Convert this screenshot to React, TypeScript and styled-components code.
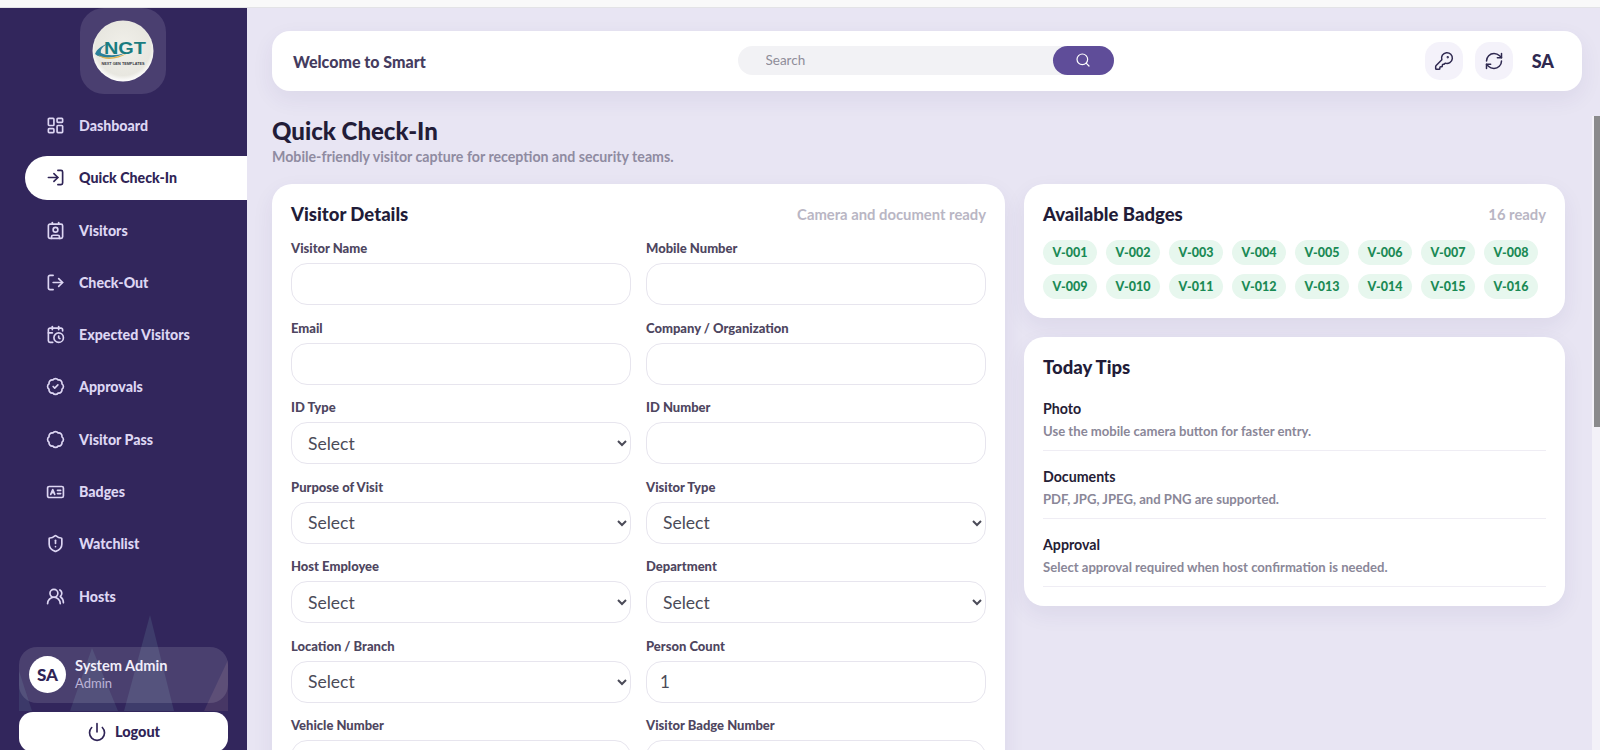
import React from "react";
import styled, { createGlobalStyle } from "styled-components";
import {
  BadgeCheck,
  Badge,
  CalendarClock,
  Contact,
  KeyRound,
  LayoutDashboard,
  LogIn,
  LogOut,
  Power,
  RefreshCw,
  Search,
  ShieldAlert,
  UsersRound,
} from "lucide-react";

const FONT = `Lato, "Noto Sans", sans-serif`;

const GlobalStyle = createGlobalStyle`
  html, body {
    margin: 0;
    height: 100%;
    overflow: hidden;
    background: #e8e5f3;
    font-family: ${FONT};
  }
  * {
    box-sizing: border-box;
  }
`;

const BadgesIcon = () => (
  <svg width="20" height="20" viewBox="0 0 24 24" fill="none" stroke="currentColor" strokeWidth="2.1" strokeLinecap="round" strokeLinejoin="round">
    <rect x="2" y="5" width="20" height="14" rx="2" />
    <path d="M6 15l2.500-6 2.500 6M7 13h3M14.500 10h4M14.500 14h4" />
  </svg>
);

const navItems = [
  { label: "Dashboard", icon: <LayoutDashboard size={21} strokeWidth={2.1} /> },
  { label: "Quick Check-In", icon: <LogIn size={21} strokeWidth={2.1} />, active: true },
  { label: "Visitors", icon: <Contact size={21} strokeWidth={2.1} /> },
  { label: "Check-Out", icon: <LogOut size={21} strokeWidth={2.1} /> },
  { label: "Expected Visitors", icon: <CalendarClock size={21} strokeWidth={2.1} /> },
  { label: "Approvals", icon: <BadgeCheck size={21} strokeWidth={2.1} /> },
  { label: "Visitor Pass", icon: <Badge size={21} strokeWidth={2.1} /> },
  { label: "Badges", icon: <BadgesIcon /> },
  { label: "Watchlist", icon: <ShieldAlert size={21} strokeWidth={2.1} /> },
  { label: "Hosts", icon: <UsersRound size={21} strokeWidth={2.1} /> },
];

const fields = [
  { label: "Visitor Name" },
  { label: "Mobile Number" },
  { label: "Email" },
  { label: "Company / Organization" },
  { label: "ID Type", select: true },
  { label: "ID Number" },
  { label: "Purpose of Visit", select: true },
  { label: "Visitor Type", select: true },
  { label: "Host Employee", select: true },
  { label: "Department", select: true },
  { label: "Location / Branch", select: true },
  { label: "Person Count", value: "1" },
  { label: "Vehicle Number" },
  { label: "Visitor Badge Number" },
];

const tips = [
  { title: "Photo", text: "Use the mobile camera button for faster entry." },
  { title: "Documents", text: "PDF, JPG, JPEG, and PNG are supported." },
  { title: "Approval", text: "Select approval required when host confirmation is needed." },
];

const badges = Array.from({ length: 16 }, (_, i) => `V-${String(i + 1).padStart(3, "0")}`);

const Logo = () => (
  <svg width="62" height="62" viewBox="0 0 62 62">
    <defs>
      <radialGradient id="disc" cx="50%" cy="45%" r="55%">
        <stop offset="0%" stopColor="#f1f0ea" />
        <stop offset="82%" stopColor="#e8e7e0" />
        <stop offset="100%" stopColor="#ffffff" />
      </radialGradient>
    </defs>
    <circle cx="31" cy="31" r="30.500" fill="url(#disc)" />
    <path d="M3 34C5 29 9 26 15 24 10 27 8 30 9 33 15 36 24 36 33 33 24 38 10 40 3 34z" fill="#2a7f9a" />
    <path d="M6 35C13 39 24 38 36 33 25 40 12 41 6 35z" fill="#e0b24d" />
    <NgtText x="33" y="34" textAnchor="middle" textLength="42" lengthAdjust="spacingAndGlyphs">NGT</NgtText>
    <TagText x="31" y="45" textAnchor="middle" textLength="43" lengthAdjust="spacingAndGlyphs">NEXT GEN TEMPLATES</TagText>
  </svg>
);

const Mountains = () => (
  <MountainSvg width="247" height="140" viewBox="0 0 247 140">
    <path d="M150 44l24 96h-50z" fill="#5d7893" fillOpacity="0.28" />
    <path d="M92 77l26 63h-48z" fill="#5d7893" fillOpacity="0.24" />
    <path d="M19 100l13 40h-13z" fill="#5d7893" fillOpacity="0.24" />
    <path d="M228 89v51h-24z" fill="#9c7f8c" fillOpacity="0.2" />
  </MountainSvg>
);

export default function App() {
  return (
    <>
      <GlobalStyle />
      <TopStrip />
      <Shell>
        <Sidebar>
          <LogoTile>
            <Logo />
          </LogoTile>
          <Nav>
            {navItems.map((item) => (
              <NavItem key={item.label} $active={item.active}>
                <NavIcon>{item.icon}</NavIcon>
                {item.label}
              </NavItem>
            ))}
          </Nav>
          <Mountains />
          <SideFooter>
            <UserCard>
              <Avatar>SA</Avatar>
              <div>
                <UserName>System Admin</UserName>
                <UserRole>Admin</UserRole>
              </div>
            </UserCard>
            <LogoutButton>
              <Power size={20} strokeWidth={2} />
              Logout
            </LogoutButton>
          </SideFooter>
        </Sidebar>
        <Main>
          <Topbar>
            <Welcome>Welcome to Smart</Welcome>
            <SearchBox>
              <SearchInput placeholder="Search" />
              <SearchButton>
                <Search size={16} strokeWidth={1.8} />
              </SearchButton>
            </SearchBox>
            <TopActions>
              <ActionTile>
                <KeyRound size={20} strokeWidth={1.8} />
              </ActionTile>
              <ActionTile>
                <RefreshCw size={20} strokeWidth={1.8} />
              </ActionTile>
              <Initials>SA</Initials>
            </TopActions>
          </Topbar>
          <Content>
            <PageTitle>Quick Check-In</PageTitle>
            <PageSub>Mobile-friendly visitor capture for reception and security teams.</PageSub>
            <Columns>
              <Card>
                <CardHead>
                  <CardTitle>Visitor Details</CardTitle>
                  <CardNote>Camera and document ready</CardNote>
                </CardHead>
                <FormGrid>
                  {fields.map((f) => (
                    <Field key={f.label}>
                      <FieldLabel>{f.label}</FieldLabel>
                      {f.select ? (
                        <FieldSelect>
                          <option>Select</option>
                        </FieldSelect>
                      ) : (
                        <FieldInput defaultValue={f.value} />
                      )}
                    </Field>
                  ))}
                </FormGrid>
              </Card>
              <SideColumn>
                <Card>
                  <CardHead>
                    <CardTitle>Available Badges</CardTitle>
                    <CardNote>16 ready</CardNote>
                  </CardHead>
                  <ChipGrid>
                    {badges.map((b) => (
                      <Chip key={b}>{b}</Chip>
                    ))}
                  </ChipGrid>
                </Card>
                <Card>
                  <TipsTitle>Today Tips</TipsTitle>
                  {tips.map((t) => (
                    <Tip key={t.title}>
                      <TipTitle>{t.title}</TipTitle>
                      <TipText>{t.text}</TipText>
                    </Tip>
                  ))}
                </Card>
              </SideColumn>
            </Columns>
          </Content>
        </Main>
      </Shell>
      <ScrollTrack>
        <ScrollThumb />
      </ScrollTrack>
    </>
  );
}

const TopStrip = styled.div`
  height: 8px;
  background: #f9f9f9;
  border-bottom: 1px solid #e3e3e6;
`;

const Shell = styled.div`
  display: flex;
  height: 742px;
  overflow: hidden;
`;

const Sidebar = styled.aside`
  position: relative;
  flex: 0 0 247px;
  display: flex;
  flex-direction: column;
  background: #32265c;
  > * {
    flex-shrink: 0;
  }
`;

const LogoTile = styled.div`
  width: 86px;
  height: 86px;
  margin: 0 auto 0 80px;
  display: flex;
  align-items: center;
  justify-content: center;
  border-radius: 24px;
  background: #4a3f70;
`;

const NgtText = styled.text`
  font-family: "Liberation Sans", sans-serif;
  font-size: 17px;
  font-weight: 700;
  fill: #1a7c80;
`;

const TagText = styled.text`
  font-family: "Liberation Sans", sans-serif;
  font-size: 3.400px;
  font-weight: 700;
  fill: #33363f;
`;

const Nav = styled.nav`
  display: flex;
  flex-direction: column;
  gap: 8.300px;
  margin: 9.500px 0 0 25px;
`;

const NavItem = styled.a<{ $active?: boolean }>`
  flex: none;
  height: 44px;
  display: flex;
  align-items: center;
  gap: 14px;
  padding-left: 21px;
  font-size: 14.200px;
  font-weight: 900;
  color: ${(p) => (p.$active ? "#2f2456" : "#ddd6f3")};
  background: ${(p) => (p.$active ? "#ffffff" : "transparent")};
  border-radius: 22px 0 0 22px;
`;

const NavIcon = styled.span`
  width: 19px;
  display: flex;
  justify-content: center;
`;

const MountainSvg = styled.svg`
  position: absolute;
  left: 0;
  bottom: 39px;
`;

const SideFooter = styled.div`
  position: relative;
  display: flex;
  flex-direction: column;
  gap: 9px;
  margin-top: 28.800px;
  padding: 0 19px;
`;

const UserCard = styled.div`
  flex: none;
  height: 56px;
  display: flex;
  align-items: center;
  gap: 9px;
  padding-left: 10px;
  border-radius: 18px;
  background: rgba(255, 255, 255, 0.12);
`;

const Avatar = styled.div`
  width: 37px;
  height: 37px;
  display: flex;
  align-items: center;
  justify-content: center;
  border-radius: 50%;
  background: #ffffff;
  color: #2f2456;
  font-size: 17px;
  font-weight: 900;
`;

const UserName = styled.div`
  font-size: 14.600px;
  font-weight: 700;
  line-height: 18px;
  color: #f1eefa;
`;

const UserRole = styled.div`
  font-size: 13px;
  line-height: 17px;
  color: #bcb4d8;
`;

const LogoutButton = styled.button`
  flex: none;
  height: 40px;
  display: flex;
  align-items: center;
  justify-content: center;
  gap: 8px;
  border: 0;
  border-radius: 14px;
  background: #ffffff;
  color: #2f2456;
  font-family: ${FONT};
  font-size: 14.500px;
  font-weight: 900;
`;

const Main = styled.main`
  flex: 1;
  min-width: 0;
  padding: 23px 18px 0 25px;
  overflow: hidden;
  background: #e8e5f3;
`;

const Topbar = styled.header`
  height: 60px;
  display: flex;
  align-items: center;
  padding: 0 28px 0 21px;
  border-radius: 18px;
  background: #ffffff;
  box-shadow: 0 8px 22px rgba(60, 45, 120, 0.07);
`;

const Welcome = styled.div`
  flex: 0 0 444.500px;
  font-size: 16px;
  font-weight: 900;
  color: #453c5f;
`;

const SearchBox = styled.div`
  position: relative;
  width: 376px;
  height: 29px;
  margin-bottom: 2px;
`;

const SearchInput = styled.input`
  width: 100%;
  height: 100%;
  padding: 0 70px 0 28px;
  border: 0;
  outline: 0;
  border-radius: 15px;
  background: #f2f2f5;
  font-family: ${FONT};
  font-size: 13.500px;
  &::placeholder {
    color: #8f8d99;
    opacity: 1;
  }
`;

const SearchButton = styled.button`
  position: absolute;
  right: 0;
  top: 0;
  width: 61px;
  height: 29px;
  display: flex;
  align-items: center;
  justify-content: center;
  border: 0;
  border-radius: 15px;
  background: #5f4d99;
  color: #ffffff;
`;

const TopActions = styled.div`
  margin-left: auto;
  display: flex;
  align-items: center;
  gap: 12px;
`;

const ActionTile = styled.div`
  width: 38px;
  height: 38px;
  display: flex;
  align-items: center;
  justify-content: center;
  border-radius: 15px;
  background: #f4f2fa;
  color: #2f2950;
`;

const Initials = styled.div`
  margin-left: 7px;
  font-size: 18px;
  font-weight: 900;
  color: #2f2950;
`;

const Content = styled.div`
  padding-right: 17px;
`;

const PageTitle = styled.h1`
  margin: 25px 0 0;
  font-size: 24px;
  line-height: 30px;
  font-weight: 900;
  color: #221c38;
`;

const PageSub = styled.p`
  margin: 1px 0 0;
  font-size: 14.200px;
  line-height: 20px;
  font-weight: 700;
  color: #8f8ba1;
`;

const Columns = styled.div`
  display: grid;
  grid-template-columns: 733px 541px;
  gap: 19px;
  align-items: start;
  margin-top: 17px;
`;

const SideColumn = styled.div`
  display: flex;
  flex-direction: column;
  gap: 19px;
`;

const Card = styled.section`
  padding: 18px 19px;
  border-radius: 20px;
  background: #ffffff;
  box-shadow: 0 8px 22px rgba(60, 45, 120, 0.07);
`;

const CardHead = styled.div`
  display: flex;
  align-items: center;
  justify-content: space-between;
  height: 24px;
`;

const CardTitle = styled.h2`
  margin: 0;
  font-size: 18.500px;
  line-height: 24px;
  font-weight: 900;
  color: #221c38;
`;

const TipsTitle = styled(CardTitle)`
  margin-bottom: 20px;
`;

const CardNote = styled.span`
  font-size: 14.800px;
  font-weight: 700;
  color: #b9b6c4;
`;

const FormGrid = styled.div`
  display: grid;
  grid-template-columns: 340px 340px;
  column-gap: 15px;
  row-gap: 13.500px;
  margin-top: 13px;
`;

const Field = styled.div`
  display: flex;
  flex-direction: column;
`;

const FieldLabel = styled.label`
  height: 18px;
  margin-bottom: 6px;
  font-size: 13px;
  line-height: 18px;
  font-weight: 900;
  color: #4e4660;
`;

const FieldInput = styled.input`
  height: 42px;
  padding: 0 13px;
  border: 1px solid #e7e5ee;
  border-radius: 16px;
  outline: 0;
  background: #ffffff;
  font-family: ${FONT};
  font-size: 17px;
  color: #4b4b58;
`;

const FieldSelect = styled.select`
  height: 42px;
  padding: 0 4px 0 12px;
  border: 1px solid #e7e5ee;
  border-radius: 16px;
  outline: 0;
  background: #ffffff;
  font-family: ${FONT};
  font-size: 17.500px;
  color: #4b4b58;
`;

const ChipGrid = styled.div`
  display: flex;
  flex-wrap: wrap;
  gap: 8.500px 9px;
  margin: 14px 0 1px;
`;

const Chip = styled.span`
  width: 54px;
  height: 25px;
  display: flex;
  align-items: center;
  justify-content: center;
  border-radius: 13px;
  background: #e7f7ee;
  color: #1a8a55;
  font-size: 12.500px;
  font-weight: 900;
`;

const Tip = styled.div`
  margin-top: 16px;
  padding-bottom: 10px;
  border-bottom: 1px solid #efedf4;
  &:first-of-type {
    margin-top: 0;
  }
  &:last-of-type {
    margin-bottom: 1px;
  }
`;

const TipTitle = styled.div`
  font-size: 14.200px;
  line-height: 20px;
  font-weight: 700;
  color: #252035;
`;

const TipText = styled.div`
  margin-top: 3px;
  font-size: 13.100px;
  line-height: 18px;
  font-weight: 700;
  color: #8a8798;
`;

const ScrollTrack = styled.div`
  position: fixed;
  top: 116px;
  right: 0;
  bottom: 0;
  width: 8px;
  padding-left: 2px;
  background: #f3f1f8;
`;

const ScrollThumb = styled.div`
  height: 311px;
  background: #8a8a8c;
`;
